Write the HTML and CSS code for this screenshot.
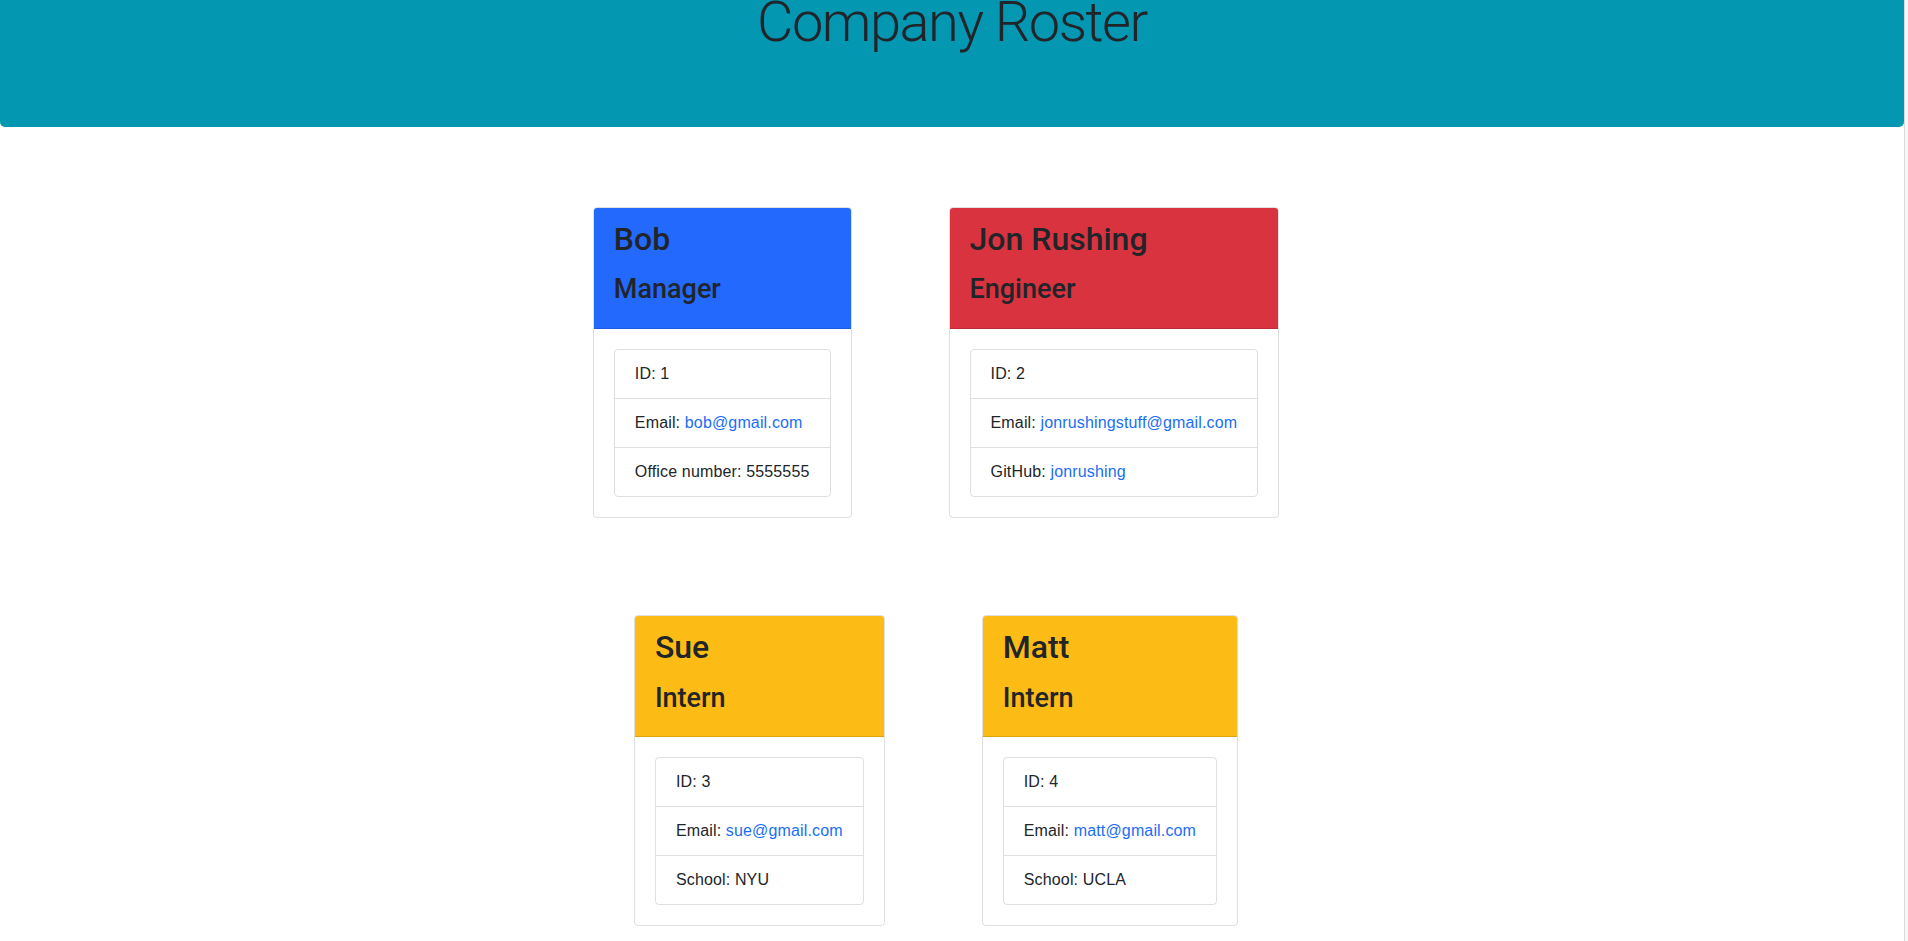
FILE: index.html
```html
<!DOCTYPE html>
<html lang="en">
<head>
  <meta charset="UTF-8">
  <meta name="viewport" content="width=device-width, initial-scale=1.0">
  <title>Company Roster</title>
  <link rel="stylesheet" href="styles.css">
</head>
<body>

  <div class="page">
    <header class="jumbotron">
      <h1>Company Roster</h1>
    </header>

    <main class="roster">
      <div class="team-row">
        <div class="card">
          <div class="card-header manager">
            <h2>Bob</h2>
            <h3>Manager</h3>
          </div>
          <div class="card-body">
            <ul class="list-group">
              <li>ID: 1</li>
              <li>Email: <a href="mailto:bob@gmail.com">bob@gmail.com</a></li>
              <li>Office number: 5555555</li>
            </ul>
          </div>
        </div>

        <div class="card">
          <div class="card-header engineer">
            <h2>Jon Rushing</h2>
            <h3>Engineer</h3>
          </div>
          <div class="card-body">
            <ul class="list-group">
              <li>ID: 2</li>
              <li>Email: <a href="mailto:jonrushingstuff@gmail.com">jonrushingstuff@gmail.com</a></li>
              <li>GitHub: <a href="#">jonrushing</a></li>
            </ul>
          </div>
        </div>
      </div>

      <div class="team-row">
        <div class="card">
          <div class="card-header intern">
            <h2>Sue</h2>
            <h3>Intern</h3>
          </div>
          <div class="card-body">
            <ul class="list-group">
              <li>ID: 3</li>
              <li>Email: <a href="mailto:sue@gmail.com">sue@gmail.com</a></li>
              <li>School: NYU</li>
            </ul>
          </div>
        </div>

        <div class="card">
          <div class="card-header intern">
            <h2>Matt</h2>
            <h3>Intern</h3>
          </div>
          <div class="card-body">
            <ul class="list-group">
              <li>ID: 4</li>
              <li>Email: <a href="mailto:matt@gmail.com">matt@gmail.com</a></li>
              <li>School: UCLA</li>
            </ul>
          </div>
        </div>
      </div>
    </main>
  </div>

  <div class="scroll-track"></div>

</body>
</html>
```

FILE: styles.css
```css
body {
  font-family: 'Liberation Sans', Arial, sans-serif;
  color: #212529;
  background-color: white;
  margin: 0;
  display: flex;
  min-height: 100vh;
  font-size: 16px;
  line-height: 1.5;
}

.page {
  flex: 1;
}

.scroll-track {
  width: 3px;
  border-left: 1px solid #dcdcdc;
  background-color: #f7f7f7;
}

.jumbotron {
  background-color: #0397b2;
  height: 127px;
  border-radius: 0 0 5px 5px;
  text-align: center;
  overflow: hidden;
}

.jumbotron h1 {
  font-family: Roboto, sans-serif;
  font-size: 56px;
  font-weight: 300;
  letter-spacing: -1.5px;
  line-height: 0.8;
  margin: 0;
}

.roster {
  display: flex;
  flex-direction: column;
  gap: 97px;
  padding-top: 80px;
}

.team-row {
  display: flex;
  justify-content: center;
  gap: 97px;
  padding-right: 32px;
}

.card {
  border: 1px solid rgba(0,0,0,0.125);
  border-radius: 4px;
  overflow: hidden;
}

.card-header {
  padding: 12px 20px;
  border-bottom: 1px solid rgba(0,0,0,0.125);
}

.card-header h2,
.card-header h3 {
  font-family: Roboto, sans-serif;
  font-weight: 500;
}

.card-header h2 {
  font-size: 32px;
  line-height: 1.2;
  margin: 0 0 15px;
}

.card-header h3 {
  font-size: 27px;
  line-height: 1.25;
  margin: 0 0 9px;
}

.manager {
  background-color: #2369fe;
}

.engineer {
  background-color: #da3340;
}

.intern {
  background-color: #fdbb16;
}

.card-body {
  padding: 20px;
}

.list-group {
  list-style: none;
  margin: 0;
  padding: 0;
  border: 1px solid rgba(0,0,0,0.125);
  border-radius: 4px;
}

.list-group li {
  padding: 12px 20px;
  letter-spacing: 0.15px;
  white-space: nowrap;
}

.list-group li + li {
  border-top: 1px solid rgba(0,0,0,0.125);
}

.list-group a {
  color: #1a6ef6;
  text-decoration: none;
}
```
